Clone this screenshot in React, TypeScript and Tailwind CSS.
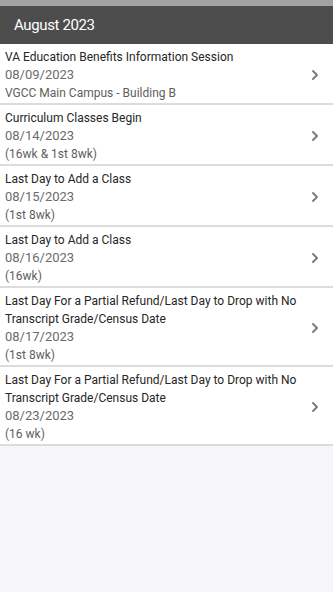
import { ChevronRight } from "lucide-react";

type EventItem = {
    title: string;
    date: string;
    note: string;
};

const events: EventItem[] = [
    { title: "VA Education Benefits Information Session", date: "08/09/2023", note: "VGCC Main Campus - Building B" },
    { title: "Curriculum Classes Begin", date: "08/14/2023", note: "(16wk & 1st 8wk)" },
    { title: "Last Day to Add a Class", date: "08/15/2023", note: "(1st 8wk)" },
    { title: "Last Day to Add a Class", date: "08/16/2023", note: "(16wk)" },
    {
        title: "Last Day For a Partial Refund/Last Day to Drop with No Transcript Grade/Census Date",
        date: "08/17/2023",
        note: "(1st 8wk)",
    },
    {
        title: "Last Day For a Partial Refund/Last Day to Drop with No Transcript Grade/Census Date",
        date: "08/23/2023",
        note: "(16 wk)",
    },
];

export default function App() {
    return (
        <div className="w-[333px] h-[592px] bg-[#f6f5f8] font-['Roboto',sans-serif] overflow-hidden">
            <div className="h-[6px] bg-[#a3a3a3]" />
            {/* Month header */}
            <div className="h-[38px] bg-[#4d4d4d] flex items-center px-[14px]">
                <span className="text-white text-[15px] tracking-tight">August 2023</span>
            </div>

            <ul>
                {events.map((ev, i) => (
                    <li
                        key={i}
                        className="bg-white border-b-2 border-[#dcdcdc] flex items-center pl-[5px] pr-[10px] pt-[4px] pb-[1px]"
                    >
                        <div className="flex-1 text-[12px] leading-[18px]">
                            <div className="text-[#262626]">{ev.title}</div>
                            <div className="text-[#6b6b6b] text-[13px]">{ev.date}</div>
                            <div className="text-[#5e5e5e]">{ev.note}</div>
                        </div>
                        <ChevronRight className="w-[16px] h-[16px] text-[#777777] shrink-0" strokeWidth={2.75} />
                    </li>
                ))}
            </ul>
        </div>
    );
}
